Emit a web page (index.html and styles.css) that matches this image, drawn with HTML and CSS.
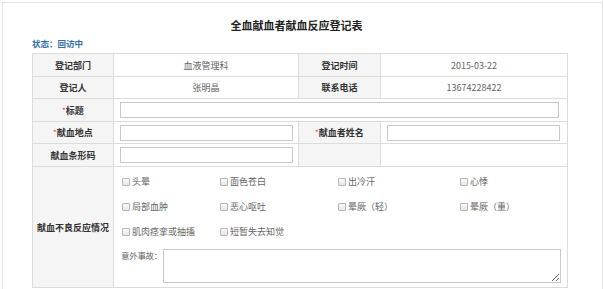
FILE: index.html
```html
<!DOCTYPE html>
<html lang="zh-CN">
<head>
  <meta charset="UTF-8" />
  <title>全血献血者献血反应登记表</title>
  <link rel="stylesheet" href="styles.css">
</head>
<body>
  <div class="page">
    <h2 class="title">全血献血者献血反应登记表</h2>
    <div class="status">状态：回访中</div>

    <table class="form-table">
      <colgroup>
        <col class="c-label"><col class="c-value"><col class="c-label2"><col class="c-value2">
      </colgroup>
      <tr class="r1">
        <th>登记部门</th>
        <td class="val">血液管理科</td>
        <th>登记时间</th>
        <td class="val">2015-03-22</td>
      </tr>
      <tr class="r2">
        <th>登记人</th>
        <td class="val">张明晶</td>
        <th>联系电话</th>
        <td class="val">13674228422</td>
      </tr>
      <tr class="r3">
        <th><span class="req">*</span>标题</th>
        <td colspan="3" class="in"><input type="text" class="txt wide" /></td>
      </tr>
      <tr class="r4">
        <th><span class="req">*</span>献血地点</th>
        <td class="in"><input type="text" class="txt" /></td>
        <th><span class="req">*</span>献血者姓名</th>
        <td class="in"><input type="text" class="txt" /></td>
      </tr>
      <tr class="r5">
        <th>献血条形码</th>
        <td class="in"><input type="text" class="txt" /></td>
        <th></th>
        <td></td>
      </tr>
      <tr class="r6">
        <th>献血不良反应情况</th>
        <td colspan="3" class="reactions">
          <div class="checks">
            <label><span class="box"></span>头晕</label>
            <label><span class="box"></span>面色苍白</label>
            <label><span class="box"></span>出冷汗</label>
            <label><span class="box"></span>心悸</label>
            <label><span class="box"></span>局部血肿</label>
            <label><span class="box"></span>恶心呕吐</label>
            <label><span class="box"></span>晕厥（轻）</label>
            <label><span class="box"></span>晕厥（重）</label>
            <label><span class="box"></span>肌肉痉挛或抽搐</label>
            <label><span class="box"></span>短暂失去知觉</label>
          </div>
          <div class="accident">
            <span class="acc-label">意外事故：</span>
            <textarea class="acc-text"></textarea>
          </div>
        </td>
      </tr>
    </table>
  </div>
</body>
</html>
```

FILE: styles.css
```css
* {
  box-sizing: border-box;
  font-family: "Microsoft YaHei", "Noto Sans CJK SC", sans-serif;
}
body {
  margin: 0;
  background: #fff;
}
.page {
  margin: 2px 0 0 2px;
  width: 601px;
  height: 300px;
  border: 1px solid #e4e4e4;
  border-bottom: none;
  padding: 14px 0 0 29px;
}
.title {
  margin: 0;
  width: 535px;
  padding-right: 6px;
  text-align: center;
  font-size: 11px;
  line-height: 16px;
  font-weight: bold;
  color: #222;
}
.status {
  margin-top: 4px;
  font-size: 8.5px;
  line-height: 12px;
  font-weight: bold;
  color: #2f6ea6;
  height: 16px;
}
.form-table {
  width: 535px;
  table-layout: fixed;
  border-collapse: collapse;
  font-size: 9px;
}
.c-label { width: 81px; }
.c-value { width: 185px; }
.c-label2 { width: 82px; }
.c-value2 { width: 187px; }
.form-table th,
.form-table td {
  border: 1px solid #dcdcdc;
  padding: 0;
  text-align: center;
  vertical-align: middle;
}
.form-table th {
  background: #f5f5f5;
  color: #333;
  font-weight: bold;
}
.form-table td {
  color: #666;
}
.r1 { height: 23px; }
.r2 { height: 22px; }
.r3 { height: 23px; }
.r4 { height: 22px; }
.r5 { height: 23px; }
.r6 { height: 121px; }
.req {
  color: #e33;
  font-weight: normal;
  font-size: 8px;
}
.form-table td.in {
  text-align: left;
  padding: 0 6px;
}
.txt {
  display: block;
  width: 173px;
  height: 16px;
  border: 1px solid #c9c9c9;
  margin: 0;
  padding: 0 4px;
  background: #fff;
}
.txt.wide {
  width: 439px;
}
.form-table td.reactions {
  text-align: left;
  vertical-align: top;
  padding: 2px 6px 0 8px;
}
.checks {
  display: grid;
  grid-template-columns: 98px 118px 122px auto;
  grid-auto-rows: 25px;
  align-items: center;
}
.checks label {
  display: flex;
  align-items: center;
  gap: 2px;
  font-size: 9px;
  color: #666;
}
.box {
  width: 8px;
  height: 8px;
  border: 1px solid #b5b5b5;
  background: linear-gradient(#fafafa, #e6e6e6);
  border-radius: 1px;
}
.accident {
  display: flex;
  align-items: flex-start;
  margin-top: 5px;
  margin-left: -1px;
}
.acc-label {
  flex: 0 0 42px;
  min-width: 0;
  white-space: nowrap;
  font-size: 8.5px;
  letter-spacing: -0.3px;
  line-height: 12px;
  color: #666;
}
.acc-text {
  flex: 1;
  min-width: 0;
  height: 34px;
  margin: 0;
  border: 1px solid #c9c9c9;
  resize: both;
}
```
